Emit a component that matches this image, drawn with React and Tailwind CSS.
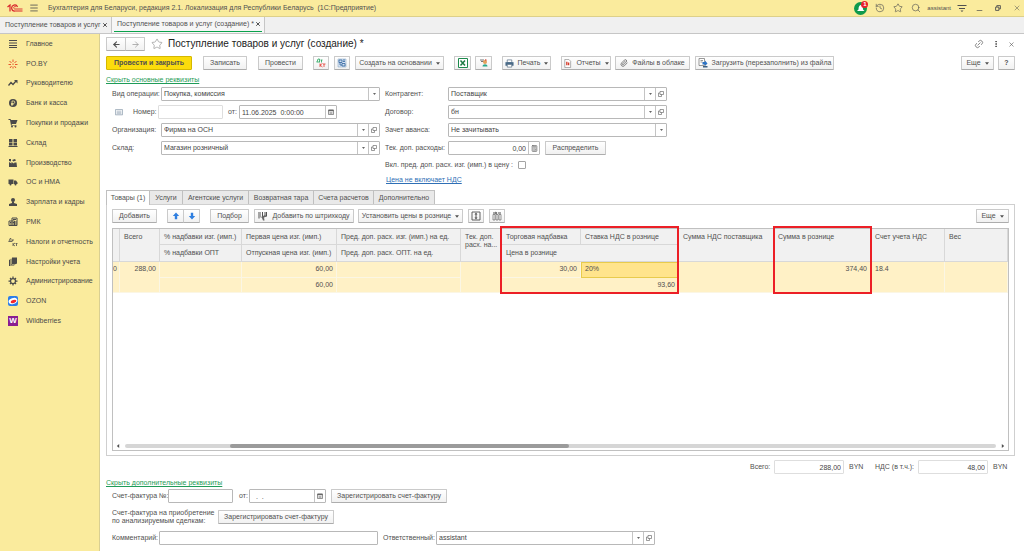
import React, { useState } from 'react';
import {
  ArrowLeft,
  ArrowRight,
  Calculator,
  History,
  Link2,
  Menu,
  MoreVertical,
  Paperclip,
  Search,
  Star,
  X,
} from 'lucide-react';

const Icon = ({ children, className = 'w-[10px] h-[10px]' }) => (
  <svg viewBox="0 0 20 20" className={`${className} shrink-0`} fill="currentColor" aria-hidden="true">
    {children}
  </svg>
);

const Caret = ({ className = 'w-[4px] h-[3px]' }) => (
  <svg viewBox="0 0 6 4" className={`${className} shrink-0`} fill="currentColor" aria-hidden="true">
    <path d="M0 0h6L3 4z" />
  </svg>
);

const OpenIcon = () => (
  <svg viewBox="0 0 12 12" className="w-[6px] h-[6px]" fill="none" stroke="currentColor" strokeWidth="1.3" aria-hidden="true">
    <path d="M4 1h7v6H4zM4 4H1v7h6V7" />
  </svg>
);

const CalendarIcon = () => (
  <svg viewBox="0 0 12 12" className="w-[6px] h-[6px]" fill="none" stroke="currentColor" strokeWidth="1.4" aria-hidden="true">
    <path d="M1 2h10v9H1z" />
    <path d="M1 3h10" strokeWidth="3" />
    <path d="M3 7h6M3 9h6" strokeWidth="1" />
  </svg>
);

const sections = [
  {
    title: 'Главное',
    icon: <Icon><path d="M2 2h16v2H2zM2 7h16v2H2zM2 12h16v2H2zM2 16h16v2H2z" /></Icon>,
  },
  {
    title: 'PO.BY',
    icon: (
      <Icon className="w-[10px] h-[10px] text-[#e8542c]">
        <path
          d="M10 1v5M3 4l4 4M17 4l-4 4M1 11h5M14 11h5M4 18l3-4M16 18l-3-4M10 15v4M10 9v3"
          fill="none"
          stroke="currentColor"
          strokeWidth="2"
        />
      </Icon>
    ),
  },
  {
    title: 'Руководителю',
    icon: (
      <Icon>
        <path d="M1 15l5-6 4 4 6-7" fill="none" stroke="currentColor" strokeWidth="2.6" />
        <path d="M12 4h7v7z" />
      </Icon>
    ),
  },
  {
    title: 'Банк и касса',
    icon: (
      <Icon>
        <circle cx="10" cy="10" r="8" />
        <path d="M8 16V6h3a2.5 2.5 0 010 5H6M6 13h5" fill="none" stroke="#faeb9d" strokeWidth="1.6" />
      </Icon>
    ),
  },
  {
    title: 'Покупки и продажи',
    icon: (
      <Icon>
        <path d="M1 2h4l1 2h13l-3 8H7l1 2h9v1H6L4 4H1z" />
        <circle cx="8" cy="17" r="2" />
        <circle cx="15" cy="17" r="2" />
      </Icon>
    ),
  },
  {
    title: 'Склад',
    icon: <Icon><path d="M2 2h7v6H2zM11 2h7v6h-7zM2 9h7v6H2zM11 9h7v6h-7zM1 16h18v2H1z" /></Icon>,
  },
  {
    title: 'Производство',
    icon: <Icon><path d="M2 18V8l5 3V8l5 3 1-2h4l1 9zM2 2h4v5l-4-1zM8 4l6-2 2 3-5 2z" /></Icon>,
  },
  {
    title: 'ОС и НМА',
    icon: (
      <Icon>
        <path d="M1 5h10v9H1zM12 7h4l3 4v3h-7z" />
        <circle cx="5" cy="15" r="2" />
        <circle cx="15" cy="15" r="2" />
      </Icon>
    ),
  },
  {
    title: 'Зарплата и кадры',
    icon: (
      <Icon>
        <circle cx="10" cy="6" r="4" />
        <path d="M8 9h4v3l6 2v4H2v-4l6-2z" />
      </Icon>
    ),
  },
  {
    title: 'РМК',
    icon: (
      <Icon>
        <path d="M8 2h10v15H8zM2 8h11v9H2z" fill="none" stroke="currentColor" strokeWidth="2" />
        <path d="M10 4h6v2h-6zM4 10h3v2H4zM9 10h3v2H9zM4 13h3v2H4zM9 13h3v2H9zM15 8h2v8h-2z" />
      </Icon>
    ),
  },
  {
    title: 'Налоги и отчетность',
    icon: (
      <Icon>
        <path
          d="M1 9h7M2 9l2-6h2v6M9 5v4M9 6h3M10 12v6M14 12l-4 3 4 3M15 13h4M17 13v5"
          fill="none"
          stroke="currentColor"
          strokeWidth="1.5"
        />
      </Icon>
    ),
  },
  {
    title: 'Настройки учета',
    icon: <Icon><path d="M2 6l2-1v12h9l-1 1H2zM5 4l2-1v12h8l-1 1H5zM8 1h10v12l-2 1H8z" /></Icon>,
  },
  {
    title: 'Администрирование',
    icon: (
      <Icon>
        <circle cx="10" cy="10" r="5" fill="none" stroke="currentColor" strokeWidth="2.5" />
        <path
          d="M10 1v4M10 15v4M1 10h4M15 10h4M4 4l2 2M14 14l2 2M16 4l-2 2M4 16l2-2"
          stroke="currentColor"
          strokeWidth="2.5"
        />
      </Icon>
    ),
  },
  {
    title: 'OZON',
    icon: (
      <Icon>
        <rect width="20" height="20" rx="4" fill="#2b7de9" />
        <ellipse cx="10" cy="10" rx="9" ry="6" fill="#fff" transform="rotate(-20 10 10)" />
        <ellipse cx="11" cy="11" rx="6" ry="3" fill="#f3262d" transform="rotate(-20 11 11)" />
      </Icon>
    ),
  },
  {
    title: 'Wildberries',
    icon: (
      <span className="flex w-[10px] h-[10px] shrink-0 items-center justify-center bg-[#8a1d91] text-[8px] font-bold text-white">
        W
      </span>
    ),
  },
];

const tabs = [
  { title: 'Товары (1)', width: 'w-[44px]' },
  { title: 'Услуги', width: 'w-[33px]' },
  { title: 'Агентские услуги', width: 'w-[66px]' },
  { title: 'Возвратная тара', width: 'w-[65px]' },
  { title: 'Счета расчетов', width: 'w-[60px]' },
  { title: 'Дополнительно', width: 'w-[61px]' },
];

const Button = ({ children, className = '', ...props }) => (
  <button
    type="button"
    className={`flex h-[14px] shrink-0 items-center justify-center gap-1 whitespace-nowrap rounded-[1px] border border-[#cacaca] border-b-[#adadad] bg-linear-to-b from-white to-[#f1f1f1] ${className}`}
    {...props}
  >
    {children}
  </button>
);

const cellButton = 'flex h-full w-[11px] shrink-0 items-center justify-center border-l border-[#c4c4c4] text-[#666]';
const fieldBox = 'flex h-[14px] shrink-0 items-center rounded-[1px] border bg-white text-[#444]';

const SelectField = ({ id, value, open, className = 'w-[219px]' }) => (
  <div className={`${fieldBox} border-[#b8b8b8] ${className}`}>
    <select id={id} defaultValue={value} className="h-full min-w-0 flex-1 appearance-none bg-transparent pl-[2px]">
      <option>{value}</option>
    </select>
    <span className={cellButton}>
      <Caret className="w-[3px] h-[2px]" />
    </span>
    {open && (
      <button type="button" aria-label="Открыть" className={cellButton}>
        <OpenIcon />
      </button>
    )}
  </div>
);

const TextField = ({ id, value = '', icon, iconLabel, muted, className = '', inputClass = '' }) => (
  <div className={`${fieldBox} ${muted ? 'border-[#dedede]' : 'border-[#b8b8b8]'} ${className}`}>
    <input id={id} type="text" defaultValue={value} className={`h-full w-full min-w-0 flex-1 bg-transparent px-[2px] ${inputClass}`} />
    {icon && (
      <button type="button" aria-label={iconLabel} className={cellButton}>
        {icon}
      </button>
    )}
  </div>
);

const TopBar = () => (
  <header className="flex h-[17px] shrink-0 items-center border-b border-[#ddd08a] bg-[#faeb9d] pl-[7px] pr-[3px]">
    <svg viewBox="0 0 32 16" className="h-[8px] w-[16px]" fill="none" stroke="#d9262c" strokeWidth="2.4" aria-label="1С">
      <path d="M1 6l5-4v13" />
      <path d="M21 6a6 6 0 10-5 8h15" />
      <path d="M18 6a2.500 2.500 0 10-2 4h15" strokeWidth="1.8" />
    </svg>
    <button type="button" aria-label="Меню" className="ml-[6px]">
      <Menu className="h-[10px] w-[10px]" strokeWidth={2} />
    </button>
    <h1 className="ml-[9px] flex-1 whitespace-pre">
      Бухгалтерия для Беларуси, редакция 2.1. Локализация для Республики Беларусь{'  '}(1С:Предприятие)
    </h1>
    <div className="flex items-center gap-2">
      <button type="button" aria-label="Уведомления" className="relative">
        <svg viewBox="0 0 26 26" className="h-[13px] w-[13px]" aria-hidden="true">
          <circle cx="13" cy="13" r="13" fill="#0f9a4c" />
          <path d="M6 18l3-3c0-6 2-9 5-9s4 4 4 9l3 3z" fill="#fff" />
        </svg>
        <span className="absolute -right-[1px] -top-[1px] flex h-[7px] w-[7px] items-center justify-center rounded-full bg-[#e8222a] text-[6px] font-bold text-white">
          1
        </span>
      </button>
      <button type="button" aria-label="История"><History className="h-[10px] w-[10px]" strokeWidth={1.5} /></button>
      <button type="button" aria-label="Избранное"><Star className="h-[10px] w-[10px]" strokeWidth={1.5} /></button>
      <button type="button" aria-label="Поиск"><Search className="h-[10px] w-[10px]" strokeWidth={1.5} /></button>
      <span className="-mx-[2px] text-[6px]">assistant</span>
      <button type="button" aria-label="Настройки">
        <Icon><path d="M1 4h18v2H1zM4 10h12v2H4zM7 15h6l-3 3z" /></Icon>
      </button>
    </div>
    <div className="ml-[9px] flex items-center gap-[12px]">
      <button type="button" aria-label="Свернуть">
        <Icon className="h-[7px] w-[7px]"><path d="M2 15h16v2H2z" /></Icon>
      </button>
      <button type="button" aria-label="Развернуть">
        <Icon className="h-[6px] w-[6px]">
          <path d="M2 7h11v11H2zM6 7V2h12v11h-5" fill="none" stroke="currentColor" strokeWidth="3" />
        </Icon>
      </button>
      <button type="button" aria-label="Закрыть"><X className="h-[8px] w-[8px]" strokeWidth={1.5} /></button>
    </div>
  </header>
);

const WindowTabs = () => (
  <nav className="flex h-[17px] shrink-0 border-b border-[#c6c6c6] bg-[#f0f0f0]">
    <a href="#list" className="flex w-[112px] items-center justify-between whitespace-nowrap border-r border-[#c6c6c6] pl-[5px] pr-[3px]">
      Поступление товаров и услуг
      <X className="h-[6px] w-[6px] shrink-0" strokeWidth={4} />
    </a>
    <a href="#new" className="flex w-[153px] border-r border-[#c6c6c6] bg-[#f6f6f6] px-[2px]">
      <span className="mb-[1px] flex flex-1 items-center justify-between whitespace-nowrap border-b border-[#0aa24c] pl-[3px] pr-[1px]">
        Поступление товаров и услуг (создание) *
        <X className="h-[6px] w-[6px] shrink-0" strokeWidth={4} />
      </span>
    </a>
  </nav>
);

const Sidebar = () => (
  <aside className="w-[100px] shrink-0 border-r border-[#d9cf92] bg-[#faeb9d]">
    <ul className="grid h-[297px] auto-rows-fr">
      {sections.map((section) => (
        <li key={section.title} className="flex">
          <a href="#section" className="flex flex-1 items-center gap-[8px] whitespace-nowrap pl-[8px] text-[#4a4a4a]">
            {section.icon}
            {section.title}
          </a>
        </li>
      ))}
    </ul>
  </aside>
);

const CommandBar = () => (
  <div className="mt-[2px] flex items-center">
    <Button className="w-[86px] border-[#d5b800]! bg-none! bg-[#fbdc0c] font-bold">Провести и закрыть</Button>
    <Button className="ml-[11px] w-[44px]">Записать</Button>
    <Button className="ml-[11px] w-[45px]">Провести</Button>
    <Button className="ml-[10px] w-[16px]" aria-label="Дт Кт">
      <Icon>
        <path d="M1 8h7M2 8l2-6h3v6M9 4h4M11 4v5" fill="none" stroke="#23a35a" strokeWidth="1.6" />
        <path d="M8 11v7M13 11l-5 3 5 4M14 12h5M16 12v6" fill="none" stroke="#e33b30" strokeWidth="1.6" />
      </Icon>
    </Button>
    <Button className="ml-[5px] w-[16px]" aria-label="Структура подчиненности">
      <Icon>
        <path d="M2 2h16v16H2z" fill="#d7e4f2" stroke="#7f9dbd" />
        <path d="M4 4h6v5H4zM10 11h6v5h-6zM12 4h4M6 9v5h4M12 7h4" fill="none" stroke="#2e62a0" strokeWidth="1.6" />
      </Icon>
    </Button>
    <Button className="ml-[5px] w-[89px]">Создать на основании <Caret /></Button>
    <Button className="ml-[10px] w-[17px]" aria-label="Excel">
      <Icon>
        <path d="M1 1h18v18H1z" fill="#fff" stroke="#1d8a4d" strokeWidth="2" />
        <path d="M5 5l9 10M14 5L5 15" stroke="#1d7a44" strokeWidth="3" />
      </Icon>
    </Button>
    <Button className="ml-[4px] w-[17px]" aria-label="Проверка контрагента">
      <Icon>
        <path d="M2 3h8v2H2zM4 6h7v2H4z" fill="#777" />
        <circle cx="12" cy="8" r="4" fill="#e3a15c" />
        <path d="M7 17c0-6 10-6 10 0z" fill="#2ba88c" />
        <path d="M12 2l4 2-3 2z" fill="#d43b2b" />
      </Icon>
    </Button>
    <Button className="ml-[10px] w-[49px]">
      <Icon className="h-[9px] w-[9px]">
        <path d="M5 2h10v6H5z" fill="#fff" stroke="#50677d" strokeWidth="1.5" />
        <path d="M1 7h18v8H1z" fill="#4a6b88" />
        <path d="M5 12h10v6H5z" fill="#fff" stroke="#50677d" strokeWidth="1.5" />
      </Icon>
      Печать <Caret />
    </Button>
    <Button className="ml-[10px] w-[50px]">
      <Icon className="h-[9px] w-[9px]">
        <path d="M4 1h9l4 4v14H4z" fill="#fff" stroke="#888" strokeWidth="1.5" />
        <path d="M7 6h3v8H7zM11 8h3v6h-3z" fill="#d43b2b" />
      </Icon>
      Отчеты <Caret />
    </Button>
    <Button className="ml-[4px] w-[75px]">
      <Paperclip className="h-[8px] w-[8px]" strokeWidth={2} />
      Файлы в облаке
    </Button>
    <Button className="ml-[5px] w-[139px]">
      <Icon>
        <path d="M2 1h11v14H2z" fill="#fff" stroke="#777" strokeWidth="1.5" />
        <path d="M5 5h5M5 8h4" stroke="#777" strokeWidth="1.5" />
        <path d="M9 8h5V5l5 6-5 5v-3H9z" fill="#2d73c4" />
        <path d="M10 16h9v3h-9z" fill="#3d5f80" />
      </Icon>
      Загрузить (перезаполнить) из файла
    </Button>
    <Button className="ml-auto w-[33px]">Еще <Caret /></Button>
    <Button className="ml-[4px] w-[17px] font-bold">?</Button>
  </div>
);

const MainFields = () => (
  <div className="mt-[2px] flex gap-[5px] pl-[6px]">
    <div className="flex w-[268px] flex-col gap-1">
      <div className="flex items-center justify-between">
        <label htmlFor="operation">Вид операции:</label>
        <SelectField id="operation" value="Покупка, комиссия" />
      </div>
      <div className="flex items-center">
        <Icon className="ml-[3px] h-[8px] w-[8px] text-[#8fa0b0]">
          <path d="M1 4h18v13H1z" fill="none" stroke="currentColor" strokeWidth="2" />
          <path d="M4 8h12M4 11h12M4 14h12" stroke="currentColor" strokeWidth="1.5" />
        </Icon>
        <label htmlFor="number" className="ml-[10px] w-[25px]">Номер:</label>
        <TextField id="number" muted className="w-[65px]" />
        <label htmlFor="date" className="ml-[5px] w-[11px]">от:</label>
        <TextField id="date" value="11.06.2025  0:00:00" icon={<CalendarIcon />} iconLabel="Выбрать дату" className="w-[98px]" />
      </div>
      <div className="flex items-center justify-between">
        <label htmlFor="org">Организация:</label>
        <SelectField id="org" value="Фирма на ОСН" open />
      </div>
      <div className="flex items-center justify-between">
        <label htmlFor="warehouse">Склад:</label>
        <SelectField id="warehouse" value="Магазин розничный" open />
      </div>
    </div>
    <div className="flex w-[282px] flex-col gap-1">
      <div className="flex items-center justify-between">
        <label htmlFor="partner">Контрагент:</label>
        <SelectField id="partner" value="Поставщик" open />
      </div>
      <div className="flex items-center justify-between">
        <label htmlFor="contract">Договор:</label>
        <SelectField id="contract" value="бн" open />
      </div>
      <div className="flex items-center justify-between">
        <label htmlFor="advance">Зачет аванса:</label>
        <SelectField id="advance" value="Не зачитывать" />
      </div>
      <div className="flex items-center">
        <label htmlFor="costs" className="w-[63px] whitespace-nowrap">Тек. доп. расходы:</label>
        <TextField
          id="costs"
          value="0,00"
          icon={<Calculator className="h-[7px] w-[7px]" strokeWidth={2.5} />}
          iconLabel="Калькулятор"
          className="w-[92px]"
          inputClass="text-right"
        />
        <Button className="ml-[5px] w-[61px]">Распределить</Button>
      </div>
      <div className="flex h-3 items-center gap-[5px]">
        <label htmlFor="include">Вкл. пред. доп. расх. изг. (имп.) в цену :</label>
        <input id="include" type="checkbox" className="h-[8px] w-[8px] appearance-none rounded-[1px] border border-[#a4a4a4] bg-white" />
      </div>
      <div className="flex h-[10px] items-center pl-[1px]">
        <a href="#price" className="text-[#2f6fb5] underline">Цена не включает НДС</a>
      </div>
    </div>
  </div>
);

const head = 'border-r border-b border-[#d8d8d8] bg-[#f1f1f1] pl-[4px] pr-[3px] pt-[4px] text-left align-top font-normal whitespace-nowrap overflow-hidden';
const cell = 'border-r border-b border-[#fbf6e4] bg-[#fff1c6] pl-[4px] pr-[3px] pt-[3px] align-top whitespace-nowrap overflow-hidden';
const activeCell = 'border border-[#e8cb4c] bg-[#ffe48c] pl-[3px] pt-[2px] align-top whitespace-nowrap overflow-hidden';

const GoodsTable = () => (
  <div className="relative">
    <div className="overflow-hidden">
      <table className="w-full table-fixed border-separate border-spacing-0">
        <colgroup>
          <col className="w-[7px]" />
          <col className="w-[40px]" />
          <col className="w-[82px]" />
          <col className="w-[95px]" />
          <col className="w-[124px]" />
          <col className="w-[41px]" />
          <col className="w-[79px]" />
          <col className="w-[98px]" />
          <col className="w-[95px]" />
          <col className="w-[97px]" />
          <col className="w-[74px]" />
          <col />
        </colgroup>
        <thead>
          <tr className="h-[16px]">
            <th rowSpan={2} className={`${head} px-0!`} />
            <th rowSpan={2} className={head}>Всего</th>
            <th className={head}>% надбавки изг. (имп.)</th>
            <th className={head}>Первая цена изг. (имп.)</th>
            <th className={head}>Пред. доп. расх. изг. (имп.) на ед.</th>
            <th rowSpan={2} className={head}>Тек. доп.<br />расх. на...</th>
            <th className={head}>Торговая надбавка</th>
            <th className={head}>Ставка НДС в рознице</th>
            <th rowSpan={2} className={head}>Сумма НДС поставщика</th>
            <th rowSpan={2} className={head}>Сумма в рознице</th>
            <th rowSpan={2} className={head}>Счет учета НДС</th>
            <th rowSpan={2} className={head}>Вес</th>
          </tr>
          <tr className="h-[17px]">
            <th className={head}>% надбавки ОПТ</th>
            <th className={head}>Отпускная цена изг. (имп.)</th>
            <th className={head}>Пред. доп. расх. ОПТ. на ед.</th>
            <th colSpan={2} className={head}>Цена в рознице</th>
          </tr>
        </thead>
        <tbody>
          <tr className="h-[16px]">
            <td rowSpan={2} className={`${cell} px-0!`}>0</td>
            <td rowSpan={2} className={`${cell} text-right`}>288,00</td>
            <td className={cell} />
            <td className={`${cell} text-right`}>60,00</td>
            <td className={cell} />
            <td rowSpan={2} className={cell} />
            <td className={`${cell} text-right`}>30,00</td>
            <td className={activeCell}>20%</td>
            <td rowSpan={2} className={cell} />
            <td rowSpan={2} className={`${cell} text-right`}>374,40</td>
            <td rowSpan={2} className={cell}>18.4</td>
            <td rowSpan={2} className={cell} />
          </tr>
          <tr className="h-[15px]">
            <td className={cell} />
            <td className={`${cell} text-right`}>60,00</td>
            <td className={cell} />
            <td colSpan={2} className={`${cell} text-right`}>93,60</td>
          </tr>
        </tbody>
      </table>
    </div>
    {/* highlighted columns */}
    <div className="pointer-events-none absolute -top-[3px] left-[387px] h-[68px] w-[179px] border-2 border-[#ec1f26]" />
    <div className="pointer-events-none absolute -top-[3px] left-[660px] h-[68px] w-[99px] border-2 border-[#ec1f26]" />
  </div>
);

const GoodsPanel = () => {
  const [activeTab, setActiveTab] = useState(0);

  return (
    <section className="mt-[5px] flex flex-1 flex-col">
      <div className="flex h-[14px]" role="tablist">
        {tabs.map((tab, index) => (
          <button
            key={tab.title}
            type="button"
            role="tab"
            aria-selected={index === activeTab}
            onClick={() => setActiveTab(index)}
            className={`relative whitespace-nowrap border-t border-r border-[#c0c0c0] first:border-l ${tab.width} ${
              index === activeTab ? 'z-10 h-[15px] bg-white' : 'h-[14px] bg-[#e9e9e9]'
            }`}
          >
            {tab.title}
          </button>
        ))}
      </div>
      <div className="flex flex-1 flex-col border border-[#cfcfcf] px-[5px] pt-[4px] pb-[4px]">
        <div className="flex items-center">
          <Button className="w-[45px]">Добавить</Button>
          <Button className="ml-[10px] w-[17px] text-[#2f7fe0]" aria-label="Вверх">
            <Icon className="h-[8px] w-[8px]"><path d="M10 1l8 9h-5v8H7v-8H2z" /></Icon>
          </Button>
          <Button className="-ml-px w-[17px] text-[#2f7fe0]" aria-label="Вниз">
            <Icon className="h-[8px] w-[8px]"><path d="M10 19l8-9h-5V2H7v8H2z" /></Icon>
          </Button>
          <Button className="ml-[10px] w-[39px]">Подбор</Button>
          <Button className="ml-[5px] w-[100px]">
            <Icon>
              <path d="M1 2h2v13H1zM5 2h1v11H5zM8 2h2v10H8zM12 2h1v8h-1zM15 2h3v9h-3z" />
              <path d="M6 12l8-4 3 3-5 2 1 6h-3l-2-5z" fill="#666" />
            </Icon>
            Добавить по штрихкоду
          </Button>
          <Button className="ml-[4px] w-[105px]">Установить цены в рознице <Caret /></Button>
          <Button className="ml-[5px] w-[16px]" aria-label="Высота строк">
            <Icon>
              <path d="M2 2h16v16H2z" fill="none" stroke="currentColor" strokeWidth="1.8" />
              <path d="M10 3l3 4h-2v6h2l-3 4-3-4h2V7H7z" />
            </Icon>
          </Button>
          <Button className="ml-[5px] w-[16px]" aria-label="Настроить колонки">
            <Icon>
              <path d="M2 7h4v11H2zM8 7h4v11H8zM14 7h4v11h-4z" fill="none" stroke="currentColor" strokeWidth="1.2" />
              <path d="M2 3h5V1l4 3-4 3V5H2zM12 3h6v2h-6z" />
            </Icon>
          </Button>
          <Button className="ml-auto w-[33px]">Еще <Caret /></Button>
        </div>
        <div className="mt-[5px] flex flex-1 flex-col border border-[#c0c0c0]">
          <GoodsTable />
          <div className="mt-auto flex h-[9px] items-center gap-[5px] px-[3px]" role="presentation">
            <Icon className="h-[4px] w-[4px]"><path d="M16 0v20L4 10z" /></Icon>
            <div className="flex h-[4px] flex-1 rounded-full bg-[#d6d6d6]">
              <div className="w-[12%]" />
              <div className="w-[39%] rounded-full bg-[#9b9b9b]" />
            </div>
            <Icon className="h-[4px] w-[4px]"><path d="M4 0v20l12-10z" /></Icon>
          </div>
        </div>
      </div>
    </section>
  );
};

const Footer = () => (
  <>
    <div className="mt-[4px] flex items-center justify-end pr-[6px]">
      <label htmlFor="total" className="w-[24px]">Всего:</label>
      <TextField id="total" value="288,00" muted className="w-[70px]" inputClass="text-right" />
      <span className="ml-[5px] w-[26px]">BYN</span>
      <label htmlFor="vat" className="w-[43px] whitespace-nowrap">НДС (в т.ч.):</label>
      <TextField id="vat" value="48,00" muted className="w-[70px]" inputClass="text-right" />
      <span className="ml-[5px] w-[16px]">BYN</span>
    </div>
    <div className="mt-[4px] flex h-[10px] items-center">
      <a href="#extra" className="text-[#1f9c58] underline">Скрыть дополнительные реквизиты</a>
    </div>
    <div className="mt-[1px] flex flex-col gap-[6px] pl-[6px]">
      <div className="flex items-center">
        <label htmlFor="invoice" className="w-[56px] whitespace-nowrap">Счет-фактура №:</label>
        <TextField id="invoice" className="w-[65px]" />
        <label htmlFor="invoice-date" className="ml-[6px] w-[10px]">от:</label>
        <TextField
          id="invoice-date"
          value="  .  ."
          icon={<CalendarIcon />}
          iconLabel="Выбрать дату"
          className="w-[77px]"
        />
        <Button className="ml-[5px] w-[116px]">Зарегистрировать счет-фактуру</Button>
      </div>
      <div className="flex items-center">
        <p className="w-[106px] whitespace-nowrap">
          Счет-фактура на приобретение
          <br />
          по анализируемым сделкам:
        </p>
        <Button className="w-[116px]">Зарегистрировать счет-фактуру</Button>
      </div>
      <div className="flex items-center">
        <label htmlFor="comment" className="w-[47px]">Комментарий:</label>
        <TextField id="comment" className="w-[219px]" />
        <label htmlFor="responsible" className="ml-[5px] w-[53px] whitespace-nowrap">Ответственный:</label>
        <SelectField id="responsible" value="assistant" open />
      </div>
    </div>
  </>
);

const App = () => (
  <div className="flex min-h-screen flex-col bg-white font-['Liberation_Sans',Arial,sans-serif] text-[7px] leading-[8px] text-[#505050]">
    <TopBar />
    <WindowTabs />
    <div className="flex flex-1">
      <Sidebar />
      <main className="flex min-w-0 flex-1 flex-col pl-[6px] pr-[9px] pb-[6px]">
        <div className="flex h-5 items-center">
          <div className="flex">
            <Button className="w-[20px]" aria-label="Назад"><ArrowLeft className="h-[9px] w-[9px]" strokeWidth={3} /></Button>
            <Button className="-ml-px w-[20px] text-[#999]" aria-label="Вперед"><ArrowRight className="h-[9px] w-[9px]" strokeWidth={2} /></Button>
          </div>
          <button type="button" aria-label="В избранное" className="ml-[6px] text-[#999]">
            <Star className="h-[12px] w-[12px]" strokeWidth={1.5} />
          </button>
          <h2 className="ml-[5px] text-[10px] leading-3 text-[#222]">Поступление товаров и услуг (создание) *</h2>
          <div className="ml-auto flex items-center gap-[8px]">
            <button type="button" aria-label="Ссылка"><Link2 className="h-[10px] w-[10px] -rotate-45" strokeWidth={1.5} /></button>
            <button type="button" aria-label="Действия"><MoreVertical className="h-[8px] w-[8px]" strokeWidth={3} /></button>
            <button type="button" aria-label="Закрыть"><X className="h-[7px] w-[7px]" strokeWidth={2} /></button>
          </div>
        </div>
        <CommandBar />
        <div className="mt-[5px] flex h-[10px] items-center">
          <a href="#main" className="text-[#1f9c58] underline">Скрыть основные реквизиты</a>
        </div>
        <MainFields />
        <GoodsPanel />
        <Footer />
      </main>
    </div>
  </div>
);

export default App;
